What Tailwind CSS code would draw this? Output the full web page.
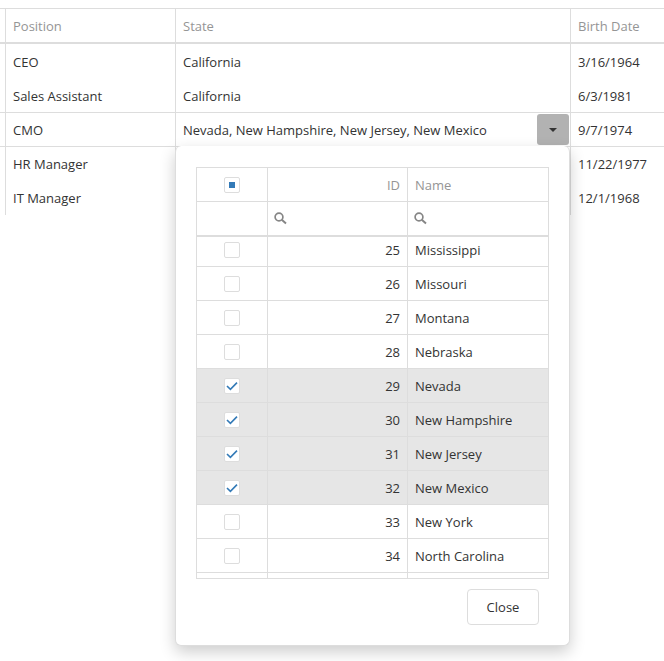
<!DOCTYPE html>
<html lang="en">
<head>
<meta charset="utf-8">
<meta name="viewport" content="width=device-width, initial-scale=1">
<title>Employees</title>
<script src="https://cdn.jsdelivr.net/npm/@tailwindcss/browser@4"></script>
</head>
<body class="min-h-screen bg-white pt-2 font-['Segoe_UI','Open_Sans','Noto_Sans',sans-serif] text-[13px] leading-5 text-[#333]">
<table class="w-full table-fixed border-separate border-spacing-0 border-t border-[#ddd]">
  <colgroup><col class="w-[5px]"><col class="w-[170px]"><col><col class="w-[94px]"></colgroup>
  <thead>
    <tr class="h-[35px] text-left text-[#959595] *:border-b-2 *:border-[#ddd] *:font-normal">
      <td></td>
      <th class="border-l px-[7px]">Position</th>
      <th class="border-l px-[7px]">State</th>
      <th class="border-l px-[7px]">Birth Date</th>
    </tr>
  </thead>
  <tbody class="*:*:border-[#ddd]">
    <tr class="h-[35px]"><td></td><td class="border-l px-[7px]">CEO</td><td class="border-l px-[7px]">California</td><td class="border-l px-[7px]">3/16/1964</td></tr>
    <tr class="h-[34px] *:border-b"><td></td><td class="border-l px-[7px]">Sales Assistant</td><td class="border-l px-[7px]">California</td><td class="border-l px-[7px]">6/3/1981</td></tr>
    <tr class="h-[34px] *:border-b">
      <td></td>
      <td class="border-l px-[7px]">CMO</td>
      <td class="relative border-l p-0">
        <div class="flex items-center pr-px">
          <input type="text" readonly aria-label="State" value="Nevada, New Hampshire, New Jersey, New Mexico" class="min-w-0 flex-1 px-[7px] outline-none">
          <button type="button" aria-label="Select states" aria-expanded="true" class="flex h-[31px] w-8 items-center justify-center rounded-[3px] bg-[#b2b2b2]">
            <svg class="h-1 w-2" viewBox="0 0 8 4" fill="#333"><path d="M0 0h8L4 4z"/></svg>
          </button>
        </div>
        <div role="dialog" aria-label="States" class="absolute top-full right-0 -left-px z-10 rounded-md border border-t-0 border-[#ddd] bg-white px-5 pt-[21px] pb-5 shadow-[0_6px_16px_rgba(0,0,0,0.2)]">
          <div class="border border-[#ddd]">
            <table class="w-full table-fixed border-separate border-spacing-0">
              <colgroup><col class="w-[70px]"><col class="w-[140px]"><col></colgroup>
              <thead>
                <tr class="h-[34px] text-[#959595] *:border-b *:border-[#ddd] *:font-normal">
                  <td class="p-0"><label class="flex justify-center"><span class="flex size-4 items-center justify-center rounded-[2px] border border-[#ddd] bg-white"><input type="checkbox" aria-label="Select all" class="size-[6px] appearance-none bg-[#337ab7]"></span></label></td>
                  <th class="border-l px-[7px] text-right">ID</th>
                  <th class="border-l px-[7px] text-left">Name</th>
                </tr>
                <tr class="h-[35px] *:border-b-2 *:border-[#ddd]">
                  <td></td>
                  <td class="border-l px-[6px] py-0"><label class="flex items-center gap-2"><svg class="size-[13px] shrink-0" viewBox="0 0 13 13" fill="none" stroke="#868686"><circle cx="5" cy="5" r="3.9" stroke-width="1.7"/><path d="M7.8 7.8l4.2 3.8" stroke-width="2"/></svg><input type="text" aria-label="Filter ID" class="w-full min-w-0 outline-none"></label></td>
                  <td class="border-l px-[6px] py-0"><label class="flex items-center gap-2"><svg class="size-[13px] shrink-0" viewBox="0 0 13 13" fill="none" stroke="#868686"><circle cx="5" cy="5" r="3.9" stroke-width="1.7"/><path d="M7.8 7.8l4.2 3.8" stroke-width="2"/></svg><input type="text" aria-label="Filter Name" class="w-full min-w-0 outline-none"></label></td>
                </tr>
              </thead>
            </table>
            <div class="overflow-hidden">
              <table class="-mt-1 w-full table-fixed border-separate border-spacing-0">
                <colgroup><col class="w-[70px]"><col class="w-[140px]"><col></colgroup>
                <tbody id="states" class="*:*:border-[#ddd]"></tbody>
              </table>
            </div>
          </div>
          <div class="flex justify-end px-[10px] pt-[10px]">
            <button type="button" class="h-9 w-[72px] rounded border border-[#ddd] bg-white">Close</button>
          </div>
        </div>
      </td>
      <td class="border-l px-[7px]">9/7/1974</td>
    </tr>
    <tr class="h-[34px]"><td></td><td class="border-l px-[7px]">HR Manager</td><td class="border-l px-[7px]"></td><td class="border-l px-[7px]">11/22/1977</td></tr>
    <tr class="h-[34px]"><td></td><td class="border-l px-[7px]">IT Manager</td><td class="border-l px-[7px]"></td><td class="border-l px-[7px]">12/1/1968</td></tr>
  </tbody>
</table>
<script>
const states = [[25,'Mississippi'],[26,'Missouri'],[27,'Montana'],[28,'Nebraska'],[29,'Nevada',1],[30,'New Hampshire',1],[31,'New Jersey',1],[32,'New Mexico',1],[33,'New York'],[34,'North Carolina']];
document.getElementById('states').innerHTML = states.map(([id, name, on]) => `
<tr class="h-[34px] *:border-b ${on ? 'bg-[#e6e6e6]' : ''}">
  <td class="p-0"><label class="flex justify-center"><span class="relative size-4">
    <input type="checkbox" aria-label="${name}" ${on ? 'checked' : ''} class="peer block size-4 appearance-none rounded-[2px] border border-[#ddd] bg-white">
    <svg class="pointer-events-none absolute inset-0 hidden size-4 peer-checked:block" viewBox="0 0 16 16" fill="none" stroke="#337ab7" stroke-width="1.6"><path d="M3 8l3.4 3.3L13 4.6"/></svg>
  </span></label></td>
  <td class="border-l px-[7px] text-right">${id}</td>
  <td class="border-l px-[7px]">${name}</td>
</tr>`).join('') + '<tr class="h-[5px]"><td class="p-0"></td><td class="border-l p-0"></td><td class="border-l p-0"></td></tr>';
</script>
</body>
</html>
